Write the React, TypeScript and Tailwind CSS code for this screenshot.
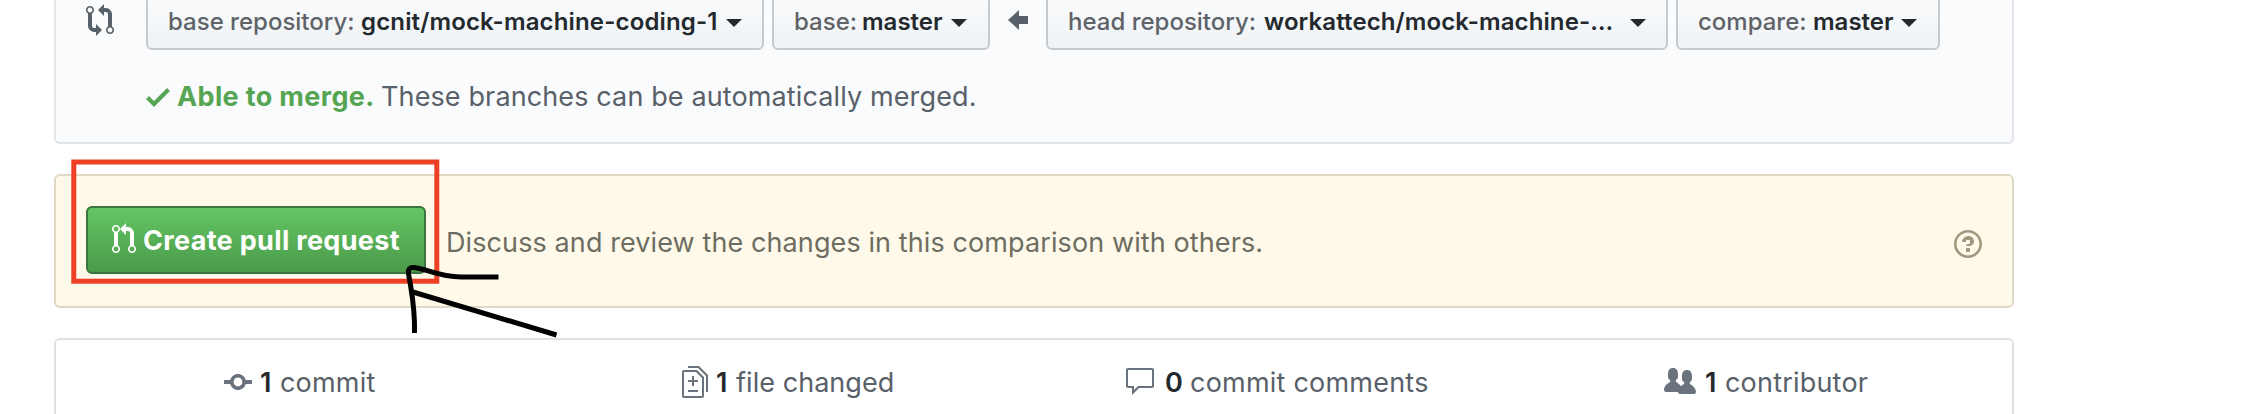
import type { ReactNode } from "react";

const paths = {
  compare:
    "M5 12H4c-.27-.02-.48-.11-.69-.31-.21-.2-.3-.42-.31-.69V4.72A1.993 1.993 0 002 1a1.993 1.993 0 00-1 3.72V11c.03.78.34 1.47.94 2.06.6.59 1.28.91 2.06.94h1v2l3-3-3-3v2zM2 1.8c.66 0 1.2.55 1.2 1.2 0 .65-.55 1.2-1.2 1.2C1.35 4.2.8 3.65.8 3c0-.65.55-1.2 1.2-1.2zm11 9.48V5c-.03-.78-.34-1.47-.94-2.06-.6-.59-1.28-.91-2.06-.94H9V0L6 3l3 3V4h1c.27.02.48.11.69.31.21.2.3.42.31.69v6.28A1.993 1.993 0 0012 15a1.993 1.993 0 001-3.72zm-1 2.92c-.66 0-1.2-.55-1.2-1.2 0-.65.55-1.2 1.2-1.2.65 0 1.2.55 1.2 1.2 0 .65-.55 1.2-1.2 1.2z",
  pull: "M11 11.28V5c-.03-.78-.34-1.47-.94-2.06C9.46 2.35 8.78 2.03 8 2H7V0L4 3l3 3V4h1c.27.02.48.11.69.31.21.2.3.42.31.69v6.28A1.993 1.993 0 0010 15a1.993 1.993 0 001-3.72zm-1 2.92c-.66 0-1.2-.55-1.2-1.2 0-.65.55-1.2 1.2-1.2.65 0 1.2.55 1.2 1.2 0 .65-.55 1.2-1.2 1.2zM4 3c0-1.11-.89-2-2-2a1.993 1.993 0 00-1 3.72v6.56A1.993 1.993 0 002 15a1.993 1.993 0 001-3.72V4.72c.59-.34 1-.98 1-1.72zm-.8 10c0 .66-.55 1.2-1.2 1.2-.65 0-1.2-.55-1.2-1.2 0-.65.55-1.2 1.2-1.2.65 0 1.2.55 1.2 1.2zM2 4.2C1.34 4.2.8 3.65.8 3c0-.65.55-1.2 1.2-1.2.65 0 1.2.55 1.2 1.2 0 .65-.55 1.2-1.2 1.2z",
  check: "M12 5l-8 8-4-4 1.5-1.5L4 10l6.5-6.5L12 5z",
  question:
    "M6 10h2v2H6v-2zm4-3.5C10 8.64 8 9 8 9H6c0-.55.45-1 1-1h.5c.28 0 .5-.22.5-.5v-1c0-.28-.22-.5-.5-.5h-1c-.28 0-.5.22-.5.5V7H4c0-1.5 1.5-3 3-3s3 1 3 2.5zM7 2.3c3.14 0 5.7 2.56 5.7 5.7s-2.56 5.7-5.7 5.7A5.71 5.71 0 011.3 8c0-3.14 2.56-5.7 5.7-5.7zM7 1C3.14 1 0 4.14 0 8s3.14 7 7 7 7-3.14 7-7-3.14-7-7-7z",
  commit:
    "M10.86 7c-.45-1.72-2-3-3.86-3-1.86 0-3.41 1.28-3.86 3H0v2h3.14c.45 1.72 2 3 3.86 3 1.86 0 3.41-1.28 3.86-3H14V7h-3.14zM7 10.2c-1.22 0-2.2-.98-2.2-2.2 0-1.22.98-2.2 2.2-2.2 1.22 0 2.2.98 2.2 2.2 0 1.22-.98 2.2-2.2 2.2z",
  diff: "M6 7h2v1H6v2H5V8H3V7h2V5h1v2zm-3 6h5v-1H3v1zM7.5 2L11 5.5V15c0 .55-.45 1-1 1H1c-.55 0-1-.45-1-1V3c0-.55.45-1 1-1h6.5zM10 6L7 3H1v12h9V6zM8.5 0H3v1h5l4 4v8h1V4.5L8.5 0z",
  comment:
    "M14 1H2c-.55 0-1 .45-1 1v8c0 .55.45 1 1 1h2v3.5L7.5 11H14c.55 0 1-.45 1-1V2c0-.55-.45-1-1-1zm0 9H7l-2 2v-2H2V2h12v8z",
  people:
    "M16 12.999c0 .439-.45 1-1 1H7.995c-.539 0-.994-.447-.995-.999H1c-.54 0-1-.561-1-1 0-2.634 3-4 3-4s.229-.409 0-1c-.841-.621-1.058-.59-1-3 .058-2.419 1.367-3 2.5-3s2.442.58 2.5 3c.058 2.41-.159 2.379-1 3-.229.59 0 1 0 1s1.549.711 2.42 2.088C9.196 9.369 10 8.999 10 8.999s.229-.409 0-1c-.841-.62-1.058-.59-1-3 .058-2.419 1.367-3 2.5-3s2.437.581 2.495 3c.059 2.41-.158 2.38-1 3-.229.59 0 1 0 1s3.005 1.366 3.005 4z",
};

function Icon({ name, units, className }: { name: keyof typeof paths; units: number; className?: string }) {
  return (
    <svg
      width={units * 2}
      height={32}
      viewBox={`0 0 ${units} 16`}
      fill="currentColor"
      fillRule="evenodd"
      className={`shrink-0 ${className ?? ""}`}
      aria-hidden="true"
    >
      <path d={paths[name]} />
    </svg>
  );
}

function RefButton({
  label,
  value,
  className,
  labelClass,
  valueClass,
}: {
  label: string;
  value: string;
  className: string;
  labelClass: string;
  valueClass: string;
}) {
  return (
    <button
      className={`flex h-[56px] shrink-0 items-center whitespace-nowrap rounded-[6px] border-2 border-[#c6c9ce] bg-gradient-to-b from-[#fafbfc] to-[#eff3f6] pl-5 text-left text-[24px] leading-8 ${className}`}
    >
      <span className={`shrink-0 font-medium text-[#5f6368] ${labelClass}`}>{label}</span>
      <span className={`shrink-0 font-semibold text-[#24292e] ${valueClass}`}>{value}</span>
      <svg width="16" height="8" viewBox="0 0 16 8" className="mt-[2px] shrink-0" fill="#24292e" aria-hidden="true">
        <path d="M0 0h16L8 8z" />
      </svg>
    </button>
  );
}

function Stat({
  icon,
  count,
  label,
  className,
  countClass,
}: {
  icon: ReactNode;
  count: number;
  label: string;
  className: string;
  countClass: string;
}) {
  return (
    <div className={`flex w-[489px] shrink-0 items-center whitespace-nowrap text-[#586069] ${className}`}>
      <span className="text-[#6a737d]">{icon}</span>
      <span className={`mt-[2px] shrink-0 font-semibold text-[#24292e] ${countClass}`}>{count}</span>
      <span className="mt-[2px]">{label}</span>
    </div>
  );
}

export default function App() {
  return (
    <main className="relative flex h-[414px] w-[2266px] flex-col gap-[30px] overflow-hidden bg-white pl-[54px] font-['Inter',sans-serif] text-[27px] leading-[42px]">
      <section className="h-[144px] w-[1960px] shrink-0 rounded-b-[6px] border-2 border-t-0 border-[#e1e4e8] bg-[#fafbfd]">
        <div className="-mt-[6px] flex h-[56px] items-center pl-[30px]">
          <Icon name="compare" units={14} className="mt-[-4px] text-[#586069]" />
          <div className="ml-8 flex items-center">
            <RefButton
              label="base repository:"
              value="gcnit/mock-machine-coding-1"
              className="w-[618px]"
              labelClass="w-[193px]"
              valueClass="w-[365px] tracking-[0.15px]"
            />
            <RefButton
              label="base:"
              value="master"
              className="ml-2 w-[218px]"
              labelClass="w-[68px]"
              valueClass="w-[89px]"
            />
            <svg width="20" height="20" viewBox="0 0 20 20" fill="#586069" className="mx-[18px] mt-[-4px] shrink-0">
              <path d="M0 10L11 0v6h9v8h-9v6z" />
            </svg>
            <RefButton
              label="head repository:"
              value="workattech/mock-machine-…"
              className="w-[622px]"
              labelClass="w-[196px]"
              valueClass="w-[366px] tracking-[0.1px]"
            />
            <RefButton
              label="compare:"
              value="master"
              className="ml-2 w-[264px]"
              labelClass="w-[115px]"
              valueClass="w-[88px]"
            />
          </div>
        </div>
        <div className="mt-[25px] flex items-center whitespace-nowrap pl-[90px] text-[#586069]">
          <Icon name="check" units={12} className="text-[#55a552]" />
          <span className="ml-[7px] mt-px w-[204px] font-bold tracking-[0.35px] text-[#55a552]">Able to merge.</span>
          <span className="mt-px tracking-[0.12px]">These branches can be automatically merged.</span>
        </div>
      </section>

      <section className="flex h-[134px] w-[1960px] shrink-0 items-center rounded-[6px] border-2 border-[#dfd8c2] bg-[#fff9ea] pl-[30px]">
        <button className="-mt-[2px] flex h-[68px] w-[340px] shrink-0 items-center whitespace-nowrap rounded-[6px] border-2 border-[#3b7440] bg-gradient-to-b from-[#63c663] to-[#4c9a4a] pl-6 font-bold text-white">
          <Icon name="pull" units={12} className="mb-[2px]" />
          <span className="ml-[7px] mt-px tracking-[0.33px]">Create pull request</span>
        </button>
        <p className="ml-[20px] mt-[3px] w-[1508px] shrink-0 whitespace-nowrap tracking-[0.1px] text-[#6d6d61]">
          Discuss and review the changes in this comparison with others.
        </p>
        <Icon name="question" units={14} className="mt-[6px] text-[#9e9a7f]" />
      </section>

      <section className="flex h-[100px] w-[1960px] shrink-0 items-start rounded-t-[6px] border-2 border-b-0 border-[#dfe2e5] pt-[20px]">
        <Stat icon={<Icon name="commit" units={14} />} count={1} label="commit" className="pl-[168px] tracking-[0.2px]" countClass="ml-[8px] w-[20px]" />
        <Stat icon={<Icon name="diff" units={13} />} count={1} label="file changed" className="pl-[137px] tracking-[0.05px]" countClass="ml-[8px] w-[20px]" />
        <Stat icon={<Icon name="comment" units={16} />} count={0} label="commit comments" className="pl-[90px] tracking-[0.22px]" countClass="ml-[9px] w-[25px]" />
        <Stat icon={<Icon name="people" units={16} />} count={1} label="contributor" className="pl-[141px] tracking-[0.2px]" countClass="ml-[9px] w-[20px]" />
      </section>

      <svg className="pointer-events-none absolute left-0 top-0" width="640" height="414" viewBox="0 0 640 414" fill="none">
        <rect x="73.8" y="162" width="363" height="119.2" stroke="#ee4025" strokeWidth="5" />
        <path
          d="M414.5 333C415 315 413 300 410.5 285L408.5 274C408 269 410 267 414 267.5C427 269 439 277 461 277H498.5"
          stroke="#000"
          strokeWidth="5"
        />
        <path d="M413 292L556.5 335" stroke="#000" strokeWidth="5" />
      </svg>
    </main>
  );
}
